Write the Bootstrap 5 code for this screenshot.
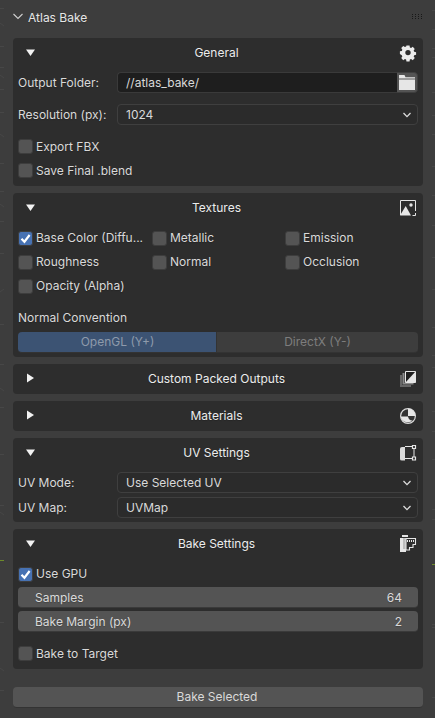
<!DOCTYPE html>
<html lang="en">
<head>
<meta charset="utf-8">
<title>Atlas Bake</title>
<link href="https://cdn.jsdelivr.net/npm/bootstrap@5.3.0/dist/css/bootstrap.min.css" rel="stylesheet">
<style>
html,body{height:100%}
body{background:#3d3d3d;color:#d9d9d9;font-family:Inter,"Noto Sans",sans-serif;font-size:12px;line-height:15px;overflow:hidden;text-shadow:0 1px 1px rgba(0,0,0,.2)}
.bk-canvas{position:absolute;left:0;top:0;z-index:0}
.bk-root{position:relative;z-index:1;padding:0 12px 0 13px;width:435px;height:718px}
.bk-top{height:38px}
.bk-top-label{color:#e6e6e6;margin-left:5px;margin-top:-4px}
.bk-chev-top{margin-top:-5px}
.bk-grip{margin-left:auto;margin-top:-5px}
.bk-panel{background:#2d2d2d;border-radius:4px;padding:0 5px;margin-bottom:7px}
.bk-head{height:34px;position:relative;color:#ececec;padding:0 0 0 8px}
.bk-head-title{position:absolute;left:-5px;right:-2px;top:7px;text-align:center}
.bk-tri{position:relative;z-index:1;display:block}
.bk-ico{position:absolute;right:1px;top:6px}
.bk-closed{height:30px}
.bk-closed .bk-head{height:30px}
.bk-lbl{width:99px;flex:none;color:#d9d9d9;white-space:nowrap}
.bk-fieldrow{height:21px}
.bk-gap-11{margin-top:11px;margin-bottom:14px}
.bk-gap-4{margin-bottom:4px}
.form-select.bk-sel{background-color:#2b2b2b;border:1px solid #3f3f3f;border-radius:4px;color:#d9d9d9;font-size:12px;line-height:15px;height:21px;min-height:0;padding:2px 20px 2px 8px;box-shadow:none;font-family:inherit;background-position:right 5px center;background-size:10px 8px;background-image:url("data:image/svg+xml,%3csvg xmlns='http://www.w3.org/2000/svg' viewBox='0 0 10 8'%3e%3cpath fill='none' stroke='%23dddddd' stroke-width='1.3' d='M1.500 2 5 5.600 8.500 2'/%3e%3c/svg%3e")}
.form-control.bk-path{background:#1e1e1e;border:1px solid #3a3a3a;border-right:0;border-radius:4px 0 0 4px;color:#d9d9d9;font-size:12px;line-height:15px;height:21px;min-height:0;padding:2px 8px;box-shadow:none;font-family:inherit}
.bk-foldbtn{background:#545454;border:1px solid #3f3f3f;border-radius:0 4px 4px 0;width:22px;height:21px;padding:0;display:flex;align-items:center;justify-content:center}
.bk-check{display:flex;align-items:center;min-height:0;height:15px;padding:0;margin:0;gap:3px;white-space:nowrap}
.bk-check .form-check-input{float:none;margin:0;width:15px;height:15px;flex:none;background-color:#545454;border:1px solid #3d3d3d;border-radius:3px;box-shadow:none}
.bk-check .form-check-input:checked{background-color:#4772b3;border-color:#3d3d3d;background-size:13px 13px;background-image:url("data:image/svg+xml,%3csvg xmlns='http://www.w3.org/2000/svg' viewBox='0 0 12 12'%3e%3cpath fill='none' stroke='%23fff' stroke-width='2' d='M2.300 6.200 5 9 9.800 2.800'/%3e%3c/svg%3e")}
.bk-check .form-check-label{color:#d9d9d9}
.bk-raise .form-check-label{margin-top:-2px}
.bk-stack{display:flex;flex-direction:column;gap:9px;padding-bottom:8px}
.bk-texgrid{display:grid;grid-template-columns:134px 133px 133px;row-gap:9px;padding-top:4px}
.bk-conv{margin-top:16px;height:15px;margin-bottom:7px}
.bk-toggle{height:21px;width:100%}
.bk-toggle .btn{font-size:12px;line-height:15px;padding:1px 0 3px;border-radius:4px;border:0;border-bottom:1px solid #333;color:#7d7d7d;background:#3d3d3d;box-shadow:none;font-family:inherit;text-shadow:none}
.bk-toggle .btn.bk-on{background:#3c5373;color:#8e9aab;flex:0 0 199px;border-radius:4px 0 0 4px}
.bk-toggle .btn.bk-off{flex:1 1 auto;border-radius:0 4px 4px 0;margin-left:0;border-left:1px solid #333}
.bk-slider{background:#545454;border-radius:4px;height:21px;display:flex;justify-content:space-between;align-items:center;padding:0 16px 0 17px;border-bottom:1px solid #3a3a3a}
.bk-sliders{display:flex;flex-direction:column;gap:3px;margin-top:5px}
.btn.bk-run{display:block;width:100%;height:21px;background:#545454;color:#d9d9d9;border:0;border-bottom:1px solid #333;border-radius:4px;font-size:12px;line-height:15px;padding:1px 2px 3px 0;margin-top:18px;font-family:inherit}
.bk-pad-t4{padding-top:4px}
.bk-mt-14{margin-top:14px}
.bk-pad-b8{padding-bottom:8px}
</style>
</head>
<body>
<svg class="bk-canvas" width="435" height="718" viewBox="0 0 435 718" aria-hidden="true">
  <path fill="none" stroke="#474747" d="M0 8.500h4M0 46.500h4M0 67.500h4M0 89.500h4M0 112.500h4M0 163.500h4M0 191.500h4M0 221.500h4M0 253.500h4M0 324.500h4M0 364.500h4M0 407.500h4M0 454.500h4M0 505.500h4M0 622.500h4M0 690.500h4M0 23l4 3M0 75l4 3M0 134l4 3M0 204l4 3M0 292l4-3M0 388l4 3M0 512l4 3M0 668l4 3M432 10.500h3M432 29.500h3M432 48.500h3M432 57.500h3M432 92.500h3M432 115.500h3M432 134.500h3M432 166.500h3M432 195.500h3M432 225.500h3M432 257.500h3M432 289.500h3M432 327.500h3M432 355.500h3M432 367.500h3M432 411.500h3M432 431.500h3M432 459.500h3M432 509.500h3M432 519.500h3M432 624.500h3M432 627.500h3M432 697.500h3"/>
  <path fill="none" stroke="#6d8b2a" d="M0 560.500h4M432 564.500h3"/>
</svg>
<div class="bk-root">
  <div class="bk-top d-flex align-items-center">
    <svg class="bk-chev-top" width="10" height="7" viewBox="0 0 10 7"><path d="M.5 1 5 5.500 9.500 1" fill="none" stroke="#cfcfcf" stroke-width="1.100"/></svg>
    <span class="bk-top-label">Atlas Bake</span>
    <svg class="bk-grip" width="11" height="5" viewBox="0 0 11 5" fill="#181818"><rect x="0" y="0" width="1" height="1"/><rect x="3" y="0" width="1" height="1"/><rect x="6" y="0" width="1" height="1"/><rect x="9" y="0" width="1" height="1"/><rect x="0" y="2" width="1" height="1"/><rect x="3" y="2" width="1" height="1"/><rect x="6" y="2" width="1" height="1"/><rect x="9" y="2" width="1" height="1"/><rect x="0" y="4" width="1" height="1"/><rect x="3" y="4" width="1" height="1"/><rect x="6" y="4" width="1" height="1"/><rect x="9" y="4" width="1" height="1"/></svg>
  </div>

  <section class="bk-panel">
    <div class="bk-head">
      <svg class="bk-tri" width="10" height="28" viewBox="0 0 10 28"><path d="M0 11.500H9L4.500 18Z" fill="#f2f2f2"/></svg>
      <div class="bk-head-title">General</div>
      <svg class="bk-ico" width="18" height="18" viewBox="0 0 18 18"><path fill-rule="evenodd" fill="#ececec" d="M7.300 1h3.400l.4 2.200 1.300.6 1.900-1.200 2.200 2.300-1.200 1.800.6 1.400 2.100.4v3l-2.100.4-.6 1.400 1.200 1.800-2.200 2.300-1.900-1.200-1.300.6-.4 2.100H7.300l-.4-2.100-1.300-.6-1.900 1.200-2.200-2.300 1.200-1.800-.6-1.400L0 10.500v-3l2.100-.4.6-1.400-1.200-1.800 2.200-2.300 1.900 1.200 1.300-.6ZM9 6a3 3 0 1 0 0 6 3 3 0 0 0 0-6Z" transform="translate(.9 .5) scale(.9)"/></svg>
    </div>
    <div class="bk-fieldrow d-flex align-items-center">
      <span class="bk-lbl">Output Folder:</span>
      <div class="input-group flex-nowrap">
        <input class="form-control bk-path" type="text" value="//atlas_bake/" aria-label="Output Folder">
        <button class="bk-foldbtn" type="button" aria-label="Browse"><svg width="16" height="15" viewBox="0 0 16 15"><path fill="#e6e6e6" d="M0 0h5.500l1 2.200H16v1.300H0ZM0 4.500h16V15H0Z"/></svg></button>
      </div>
    </div>
    <div class="bk-fieldrow bk-gap-11 d-flex align-items-center">
      <span class="bk-lbl">Resolution (px):</span>
      <select class="form-select bk-sel" aria-label="Resolution"><option>1024</option></select>
    </div>
    <div class="bk-stack">
      <div class="form-check bk-check"><input class="form-check-input" type="checkbox" id="c1"><label class="form-check-label" for="c1">Export FBX</label></div>
      <div class="form-check bk-check"><input class="form-check-input" type="checkbox" id="c2"><label class="form-check-label" for="c2">Save Final .blend</label></div>
    </div>
  </section>

  <section class="bk-panel">
    <div class="bk-head">
      <svg class="bk-tri" width="10" height="28" viewBox="0 0 10 28"><path d="M0 11.500H9L4.500 18Z" fill="#f2f2f2"/></svg>
      <div class="bk-head-title">Textures</div>
      <svg class="bk-ico" width="18" height="18" viewBox="0 0 18 18"><path fill="none" stroke="#e6e6e6" d="M1.500 16V1.500H16.500V12"/><path fill="none" stroke="#e6e6e6" d="M13.500 16.500h3V14"/><path fill="#e6e6e6" d="M1 16.500 6.700 7 12 16.500Z"/><circle cx="12" cy="6" r="1.700" fill="#e6e6e6"/></svg>
    </div>
    <div class="bk-texgrid bk-raise">
      <div class="form-check bk-check"><input class="form-check-input" type="checkbox" id="t1" checked><label class="form-check-label" for="t1">Base Color (Diffu...</label></div>
      <div class="form-check bk-check"><input class="form-check-input" type="checkbox" id="t2"><label class="form-check-label" for="t2">Metallic</label></div>
      <div class="form-check bk-check"><input class="form-check-input" type="checkbox" id="t3"><label class="form-check-label" for="t3">Emission</label></div>
      <div class="form-check bk-check"><input class="form-check-input" type="checkbox" id="t4"><label class="form-check-label" for="t4">Roughness</label></div>
      <div class="form-check bk-check"><input class="form-check-input" type="checkbox" id="t5"><label class="form-check-label" for="t5">Normal</label></div>
      <div class="form-check bk-check"><input class="form-check-input" type="checkbox" id="t6"><label class="form-check-label" for="t6">Occlusion</label></div>
      <div class="form-check bk-check"><input class="form-check-input" type="checkbox" id="t7"><label class="form-check-label" for="t7">Opacity (Alpha)</label></div>
    </div>
    <div class="bk-conv">Normal Convention</div>
    <div class="btn-group bk-toggle d-flex" role="group">
      <button type="button" class="btn bk-on">OpenGL (Y+)</button>
      <button type="button" class="btn bk-off">DirectX (Y-)</button>
    </div>
    <div class="pt-1"></div>
  </section>

  <section class="bk-panel bk-closed">
    <div class="bk-head">
      <svg class="bk-tri" width="10" height="28" viewBox="0 0 10 28"><path d="M1 9.500V18.500L8 14Z" fill="#f2f2f2"/></svg>
      <div class="bk-head-title">Custom Packed Outputs</div>
      <svg class="bk-ico" width="18" height="18" viewBox="0 0 18 18"><path fill="#666" d="M1 5h2v10h9v2H1Z"/><path fill="#8a8a8a" d="M3.500 3h2v10h9v1.500H3.500Z"/><path fill="#1f1f1f" d="M6.500 1h10.500v11.500H6.500Z"/><path fill="none" stroke="#e6e6e6" d="M6.500 1.500h10v11h-10Z"/><path fill="#e6e6e6" d="M6.500 12.500 16.500 1.500V12.500Z"/></svg>
    </div>
  </section>

  <section class="bk-panel bk-closed">
    <div class="bk-head">
      <svg class="bk-tri" width="10" height="28" viewBox="0 0 10 28"><path d="M1 9.500V18.500L8 14Z" fill="#f2f2f2"/></svg>
      <div class="bk-head-title">Materials</div>
      <svg class="bk-ico" width="18" height="18" viewBox="0 0 18 18"><circle cx="9" cy="9" r="7.400" fill="#333" stroke="#d9d9d9" stroke-width="1.200"/><path fill="#e6e6e6" d="M9 1.600A7.400 7.400 0 0 1 16.400 9H9Z"/><path fill="#e6e6e6" d="M1.600 9.500H9c.5 3 3 4.500 5 3.700A7.400 7.400 0 0 1 1.600 9.500Z"/></svg>
    </div>
  </section>

  <section class="bk-panel">
    <div class="bk-head">
      <svg class="bk-tri" width="10" height="28" viewBox="0 0 10 28"><path d="M0 11.500H9L4.500 18Z" fill="#f2f2f2"/></svg>
      <div class="bk-head-title">UV Settings</div>
      <svg class="bk-ico" width="18" height="18" viewBox="0 0 18 18"><path fill="#d9d9d9" d="M1 4.500Q1 3 3 3h3v13.500H3Q1 16.500 1 15Z"/><path fill="none" stroke="#e6e6e6" d="M6 2.500h7M6 14.500h7M15 5v8"/><path fill="none" stroke="#e6e6e6" stroke-width="1.200" d="M13.500 1.500h3v3h-3ZM13.500 13h3v3h-3Z"/></svg>
    </div>
    <div class="bk-gap-4 d-flex align-items-center">
      <span class="bk-lbl">UV Mode:</span>
      <select class="form-select bk-sel" aria-label="UV Mode"><option>Use Selected UV</option></select>
    </div>
    <div class="d-flex align-items-center">
      <span class="bk-lbl">UV Map:</span>
      <select class="form-select bk-sel" aria-label="UV Map"><option>UVMap</option></select>
    </div>
    <div class="pt-1"></div>
  </section>

  <section class="bk-panel">
    <div class="bk-head">
      <svg class="bk-tri" width="10" height="28" viewBox="0 0 10 28"><path d="M0 11.500H9L4.500 18Z" fill="#f2f2f2"/></svg>
      <div class="bk-head-title">Bake Settings</div>
      <svg class="bk-ico" width="18" height="18" viewBox="0 0 18 18"><path fill="#e6e6e6" d="M3 0h6v2H3ZM1 3h3v11h3v3H1Z"/><path fill="#bdbdbd" d="M4 3h3v11H4Z"/><path fill="none" stroke="#e6e6e6" stroke-width="1.100" d="M7 3.500h9.500v6h-2.500v3H10.500v2.500H7Z"/><path fill="#e6e6e6" d="M8 5h1v2H8ZM10 5h1v2h-1ZM12 5h1v2h-1ZM14 5h1v2h-1Z"/></svg>
    </div>
    <div class="bk-pad-t4 bk-raise"><div class="form-check bk-check"><input class="form-check-input" type="checkbox" id="b1" checked><label class="form-check-label" for="b1">Use GPU</label></div></div>
    <div class="bk-sliders">
      <div class="bk-slider"><span>Samples</span><span>64</span></div>
      <div class="bk-slider"><span>Bake Margin (px)</span><span>2</span></div>
    </div>
    <div class="form-check bk-check bk-mt-14"><input class="form-check-input" type="checkbox" id="b2"><label class="form-check-label" for="b2">Bake to Target</label></div>
    <div class="bk-pad-b8"></div>
  </section>

  <button type="button" class="btn bk-run">Bake Selected</button>
</div>
<script src="https://cdn.jsdelivr.net/npm/bootstrap@5.3.0/dist/js/bootstrap.bundle.min.js"></script>
</body>
</html>
